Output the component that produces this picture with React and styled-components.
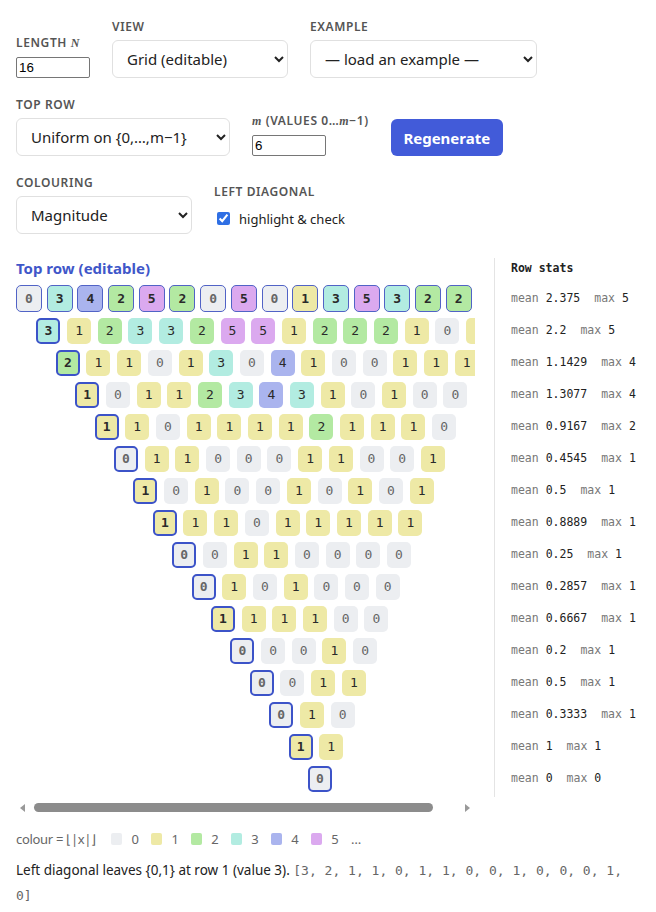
import React, { useMemo } from "react";
import styled, { createGlobalStyle } from "styled-components";

const TOP = [0, 3, 4, 2, 5, 2, 0, 5, 0, 1, 3, 5, 3, 2, 2, 1];

const PALETTE = ["#eceef1", "#eee9a6", "#b3e9a2", "#b2ece1", "#aab4ee", "#dba9ef"];

const GlobalStyle = createGlobalStyle`
  body {
    margin: 0;
    background: #fff;
    font-family: "Noto Sans", "Open Sans", sans-serif;
    color: #222;
  }
`;

const Page = styled.div`
  padding: 20px 16px 0;
`;

/* ——— Controls ——— */
const Controls = styled.div`
  display: flex;
  flex-direction: column;
  gap: 20px;
`;

const ControlRow = styled.div`
  display: flex;
  align-items: flex-end;
  gap: 22px;
`;

const Field = styled.label`
  display: flex;
  flex-direction: column;
  gap: 7px;
`;

const Label = styled.span`
  font-size: 12px;
  font-weight: 600;
  letter-spacing: 0.05em;
  text-transform: uppercase;
  color: #555;
  line-height: 13px;

  i {
    font-family: "Liberation Serif", serif;
    font-weight: 700;
    text-transform: none;
  }
`;

const NumInput = styled.input`
  width: 74px;
  height: 21px;
  box-sizing: border-box;
  font: 13.33px "Liberation Sans", Arial, sans-serif;
  border: 1px solid #767676;
  border-radius: 2px;
  padding: 1px 2px;
`;

const Select = styled.select`
  width: ${(p) => p.$w}px;
  height: 38px;
  box-sizing: border-box;
  font-family: "Noto Sans", sans-serif;
  font-size: 15px;
  color: #222;
  background: #fff;
  border: 1px solid #e0e0e0;
  border-radius: 6px;
  padding: 0 8px 0 10px;
`;

const Button = styled.button`
  width: 112px;
  height: 37px;
  border: none;
  border-radius: 6px;
  background: #425bd9;
  color: #fff;
  font-family: "Noto Sans", sans-serif;
  font-size: 15px;
  font-weight: 700;
  cursor: pointer;
`;

const CheckLine = styled.label`
  display: flex;
  align-items: center;
  gap: 9px;
  height: 29px;
  padding-bottom: 2px;
  box-sizing: border-box;
  font-size: 13px;

  input {
    margin: 0 0 0 3px;
    width: 13px;
    height: 13px;
    accent-color: #2f6fe4;
  }
`;

/* ——— Main area ——— */
const Main = styled.div`
  display: flex;
  gap: 19px;
  margin-top: 24px;
`;

const Left = styled.div`
  flex: 1;
  min-width: 0;
`;

const Heading = styled.div`
  font-size: 15px;
  font-weight: 700;
  color: #3f57c9;
  height: 20px;
  line-height: 20px;
  margin-bottom: 7px;
`;

const Scroller = styled.div`
  overflow-x: auto;
  padding-bottom: 8px;
  scrollbar-width: none;
`;

/* the page keeps a classic horizontal scrollbar under the triangle */
const ScrollBar = styled.div`
  display: flex;
  align-items: center;
  height: 15px;
  padding: 0 5px 0 4px;
`;

const Arrow = styled.span`
  width: 0;
  height: 0;
  border-top: 4px solid transparent;
  border-bottom: 4px solid transparent;
  ${(p) =>
    p.$dir === "left"
      ? "border-right: 5px solid #999;"
      : "border-left: 5px solid #999; margin-left: auto;"}
`;

const Thumb = styled.span`
  width: 399px;
  height: 9px;
  margin-left: 9px;
  border-radius: 5px;
  background: #8c8c8c;
`;

const Rows = styled.div`
  display: flex;
  flex-direction: column;
  gap: 5px;
  width: max-content;
  padding-right: 8px;
`;

const Row = styled.div`
  display: flex;
  align-items: center;
  height: 27px;
  gap: ${(p) => (p.$top ? 4.7 : 6.7)}px;
  padding-left: ${(p) => p.$indent}px;
`;

const Cell = styled.div`
  box-sizing: border-box;
  width: ${(p) => (p.$top ? 26 : 24)}px;
  height: ${(p) => (p.$top ? 27 : 26)}px;
  border-radius: 5px;
  background: ${(p) => PALETTE[Math.min(p.$v, 5)]};
  border: ${(p) =>
    p.$top ? "1px solid #5163c6" : p.$diag ? "2px solid #3c53c8" : "none"};
  display: flex;
  align-items: center;
  justify-content: center;
  font-family: "DejaVu Sans Mono", monospace;
  font-size: 13px;
  font-weight: ${(p) => (p.$top || p.$diag ? 700 : 400)};
  color: ${(p) => (p.$v === 0 ? "#666" : "#2a2a2a")};
`;

/* ——— Row stats ——— */
const Stats = styled.div`
  align-self: flex-start;
  width: 129px;
  padding: 0 0 5px 16px;
  border-left: 1px solid #e4e4e4;
  font-family: "DejaVu Sans Mono", monospace;
  font-size: 11.5px;
`;

const StatsTitle = styled.div`
  font-weight: 700;
  height: 20px;
  line-height: 20px;
  margin-bottom: 7px;
  color: #222;
`;

const StatLines = styled.div`
  display: flex;
  flex-direction: column;
  gap: 5px;
`;

const StatLine = styled.div`
  height: 27px;
  line-height: 27px;
  white-space: nowrap;
  color: #222;

  span {
    color: #777;
  }
  .max {
    margin-left: 14px;
  }
`;

/* ——— Footer ——— */
const Legend = styled.div`
  display: flex;
  align-items: center;
  gap: 12.5px;
  margin-top: 15px;
  font-size: 13px;
  color: #666;
`;

const LegendFormula = styled.span`
  margin-right: 3px;
  letter-spacing: -0.3px;
`;

const LegendItem = styled.span`
  display: flex;
  align-items: center;
  gap: 9px;
`;

const Swatch = styled.span`
  width: 11px;
  height: 12px;
  border-radius: 2px;
  background: ${(p) => p.$c};
`;

const Note = styled.p`
  margin: 10px 0 0;
  font-size: 13.5px;
  line-height: 25px;
  color: #222;
  padding-right: 16px;
`;

const Mono = styled.span`
  font-family: "DejaVu Sans Mono", monospace;
  font-size: 13px;
  color: #666;
`;

function fmt(n) {
  return String(Number(n.toFixed(4)));
}

export default function App() {
  const rows = useMemo(() => {
    const out = [TOP];
    while (out[out.length - 1].length > 1) {
      const r = out[out.length - 1];
      out.push(r.slice(1).map((v, i) => Math.abs(v - r[i])));
    }
    return out;
  }, []);

  const diag = rows.slice(1).map((r) => r[0]);

  return (
    <Page>
      <GlobalStyle />
      <Controls>
        <ControlRow>
          <Field>
            <Label>
              Length <i>N</i>
            </Label>
            <NumInput type="number" defaultValue={16} />
          </Field>
          <Field>
            <Label>View</Label>
            <Select $w={176} defaultValue="grid">
              <option value="grid">Grid (editable)</option>
            </Select>
          </Field>
          <Field>
            <Label>Example</Label>
            <Select $w={227} defaultValue="">
              <option value="">— load an example —</option>
            </Select>
          </Field>
        </ControlRow>

        <ControlRow>
          <Field>
            <Label>Top row</Label>
            <Select $w={214} defaultValue="u">
              <option value="u">Uniform on {"{0,…,m−1}"}</option>
            </Select>
          </Field>
          <Field>
            <Label>
              <i>m</i> (values 0…<i>m</i>−1)
            </Label>
            <NumInput type="number" defaultValue={6} />
          </Field>
          <Button>Regenerate</Button>
        </ControlRow>

        <ControlRow>
          <Field>
            <Label>Colouring</Label>
            <Select $w={176} defaultValue="mag">
              <option value="mag">Magnitude</option>
            </Select>
          </Field>
          <Field as="div">
            <Label>Left diagonal</Label>
            <CheckLine>
              <input type="checkbox" defaultChecked />
              highlight &amp; check
            </CheckLine>
          </Field>
        </ControlRow>
      </Controls>

      <Main>
        <Left>
          <Heading>Top row (editable)</Heading>
          <Scroller>
            <Rows>
              {rows.map((r, k) => (
                <Row key={k} $top={k === 0} $indent={k === 0 ? 0 : 1 + k * 19.4}>
                  {r.map((v, i) => (
                    <Cell key={i} $v={v} $top={k === 0} $diag={k > 0 && i === 0}>
                      {v}
                    </Cell>
                  ))}
                </Row>
              ))}
            </Rows>
          </Scroller>
          <ScrollBar>
            <Arrow $dir="left" />
            <Thumb />
            <Arrow $dir="right" />
          </ScrollBar>
        </Left>

        <Stats>
          <StatsTitle>Row stats</StatsTitle>
          <StatLines>
            {rows.map((r, k) => {
              const mean = r.reduce((a, b) => a + b, 0) / r.length;
              return (
                <StatLine key={k}>
                  <span>mean</span> {fmt(mean)}
                  <span className="max">max</span> {Math.max(...r)}
                </StatLine>
              );
            })}
          </StatLines>
        </Stats>
      </Main>

      <Legend>
        <LegendFormula>colour = ⌊|x|⌋</LegendFormula>
        {PALETTE.map((c, i) => (
          <LegendItem key={i}>
            <Swatch $c={c} />
            {i}
          </LegendItem>
        ))}
        <span>…</span>
      </Legend>

      <Note>
        Left diagonal leaves {"{0,1}"} at row 1 (value 3).{" "}
        <Mono>[{diag.join(", ")}]</Mono>
      </Note>
    </Page>
  );
}
